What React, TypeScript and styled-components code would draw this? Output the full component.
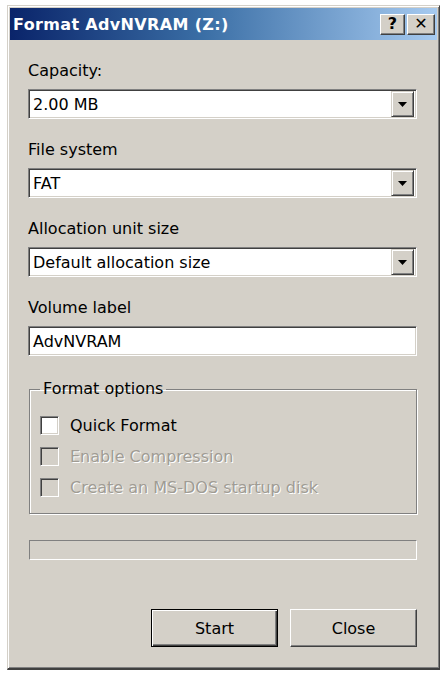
import React from "react";
import styled, { createGlobalStyle } from "styled-components";

const GlobalStyle = createGlobalStyle`
  html, body {
    margin: 0;
    padding: 0;
    background: #ffffff;
  }
  body {
    font-family: "DejaVu Sans", Verdana, sans-serif;
  }
`;

const Page = styled.div`
  padding: 5px 0 0 7px;
  width: 445px;
  height: 673px;
  box-sizing: border-box;
  background: #ffffff;
`;

const Window = styled.div`
  width: 433px;
  height: 665px;
  box-sizing: border-box;
  background: #d4d0c8;
  border-top: 1px solid #d4d0c8;
  border-left: 1px solid #d4d0c8;
  border-right: 1px solid #404040;
  border-bottom: 2px solid #404040;
  box-shadow: inset 1px 1px 0 #ffffff, inset -1px -1px 0 #808080;
  padding: 2px 2px 0 2px;
  display: flex;
  flex-direction: column;
`;

const TitleBar = styled.div`
  height: 32px;
  flex: 0 0 auto;
  display: flex;
  align-items: center;
  padding: 0 2px 0 3px;
  background: linear-gradient(90deg, #0a246a 0%, #3a6ea5 45%, #a6caf0 100%);
`;

const Title = styled.div`
  flex: 1;
  color: #ffffff;
  font-weight: bold;
  font-size: 16px;
  letter-spacing: 0.35px;
  white-space: nowrap;
`;

const CaptionButton = styled.div<{ $w: number }>`
  width: ${(p) => p.$w}px;
  height: 21px;
  box-sizing: border-box;
  background: #d4d0c8;
  border-top: 1px solid #ffffff;
  border-left: 1px solid #ffffff;
  border-right: 1px solid #404040;
  border-bottom: 1px solid #404040;
  box-shadow: inset -1px -1px 0 #808080;
  display: flex;
  align-items: center;
  justify-content: center;
  color: #000000;
  font-weight: bold;
  font-size: 16px;
  margin-left: 2px;
  line-height: 1;
`;

const Body = styled.div`
  flex: 1;
  display: flex;
  flex-direction: column;
  padding: 22px 20px 0 18px;
`;

const Label = styled.div`
  font-size: 16px;
  line-height: 18px;
  color: #000000;
  margin-bottom: 9px;
`;

const Field = styled.div<{ $last?: boolean }>`
  height: 30px;
  box-sizing: border-box;
  background: #ffffff;
  border-top: 1px solid #808080;
  border-left: 1px solid #808080;
  border-right: 1px solid #ffffff;
  border-bottom: 1px solid #ffffff;
  box-shadow: inset 1px 1px 0 #404040, inset -1px -1px 0 #d4d0c8;
  display: flex;
  align-items: center;
  margin-bottom: ${(p) => (p.$last ? 24 : 22)}px;
  padding: 2px 2px 2px 4px;
`;

const FieldText = styled.div`
  flex: 1;
  font-size: 16px;
  color: #000000;
`;

const DropButton = styled.div`
  width: 23px;
  height: 26px;
  box-sizing: border-box;
  background: #d4d0c8;
  border-top: 1px solid #d4d0c8;
  border-left: 1px solid #d4d0c8;
  border-right: 1px solid #404040;
  border-bottom: 1px solid #404040;
  box-shadow: inset 1px 1px 0 #ffffff, inset -1px -1px 0 #808080;
  display: flex;
  align-items: center;
  justify-content: center;
`;

const Group = styled.fieldset`
  margin: 0 0 0 1px;
  padding: 18px 0 0 10px;
  height: 134px;
  box-sizing: border-box;
  border: 1px solid #808080;
  box-shadow: 1px 1px 0 #ffffff, inset 1px 1px 0 #ffffff;
  border-radius: 0;
  display: flex;
  flex-direction: column;
  gap: 12px;
`;

const Legend = styled.legend`
  font-size: 16px;
  line-height: 18px;
  color: #000000;
  padding: 0 3px;
  margin-left: 0;
`;

const CheckRow = styled.div`
  display: flex;
  align-items: center;
  gap: 11px;
  height: 19px;
`;

const CheckBox = styled.div<{ $disabled?: boolean }>`
  width: 19px;
  height: 19px;
  box-sizing: border-box;
  background: ${(p) => (p.$disabled ? "#d4d0c8" : "#ffffff")};
  border-top: 1px solid #808080;
  border-left: 1px solid #808080;
  border-right: 1px solid #ffffff;
  border-bottom: 1px solid #ffffff;
  box-shadow: inset 1px 1px 0 #404040, inset -1px -1px 0 #d4d0c8;
`;

const CheckText = styled.div<{ $disabled?: boolean }>`
  font-size: 16px;
  color: ${(p) => (p.$disabled ? "#a09c94" : "#000000")};
  text-shadow: ${(p) => (p.$disabled ? "1px 1px 0 #ffffff" : "none")};
`;

const Progress = styled.div`
  margin: 26px 0 0 1px;
  height: 20px;
  box-sizing: border-box;
  border-top: 1px solid #808080;
  border-left: 1px solid #808080;
  border-right: 1px solid #ffffff;
  border-bottom: 1px solid #ffffff;
  background: #d4d0c8;
`;

const ButtonRow = styled.div`
  display: flex;
  justify-content: flex-end;
  gap: 12px;
  margin-top: 49px;
`;

const Button = styled.div<{ $default?: boolean }>`
  width: 127px;
  height: 38px;
  box-sizing: border-box;
  background: #d4d0c8;
  display: flex;
  align-items: center;
  justify-content: center;
  font-size: 16px;
  color: #000000;
  border: 1px solid ${(p) => (p.$default ? "#000000" : "transparent")};
  border-top-color: ${(p) => (p.$default ? "#000000" : "#ffffff")};
  border-left-color: ${(p) => (p.$default ? "#000000" : "#ffffff")};
  border-right-color: ${(p) => (p.$default ? "#000000" : "#404040")};
  border-bottom-color: ${(p) => (p.$default ? "#000000" : "#404040")};
  box-shadow: ${(p) =>
    p.$default
      ? "inset 1px 1px 0 #ffffff, inset -1px -1px 0 #404040, inset -2px -2px 0 #808080"
      : "inset -1px -1px 0 #808080"};
`;

const Arrow = () => (
  <svg width="9" height="5" viewBox="0 0 9 5">
    <path d="M0 0 H9 L4.5 5 Z" fill="#000000" />
  </svg>
);

const Select = ({ value }: { value: string }) => (
  <Field>
    <FieldText>{value}</FieldText>
    <DropButton>
      <Arrow />
    </DropButton>
  </Field>
);

const options = [
  { text: "Quick Format", disabled: false },
  { text: "Enable Compression", disabled: true },
  { text: "Create an MS-DOS startup disk", disabled: true },
];

export default function App() {
  return (
    <>
      <GlobalStyle />
      <Page>
        <Window>
          <TitleBar>
            <Title>Format AdvNVRAM (Z:)</Title>
            <CaptionButton $w={25}>?</CaptionButton>
            <CaptionButton $w={28}>✕</CaptionButton>
          </TitleBar>
          <Body>
            <Label>Capacity:</Label>
            <Select value="2.00 MB" />
            <Label>File system</Label>
            <Select value="FAT" />
            <Label>Allocation unit size</Label>
            <Select value="Default allocation size" />
            <Label>Volume label</Label>
            <Field $last>
              <FieldText>AdvNVRAM</FieldText>
            </Field>
            <Group>
              <Legend>Format options</Legend>
              {options.map((o) => (
                <CheckRow key={o.text}>
                  <CheckBox $disabled={o.disabled} />
                  <CheckText $disabled={o.disabled}>{o.text}</CheckText>
                </CheckRow>
              ))}
            </Group>
            <Progress />
            <ButtonRow>
              <Button $default>Start</Button>
              <Button>Close</Button>
            </ButtonRow>
          </Body>
        </Window>
      </Page>
    </>
  );
}
